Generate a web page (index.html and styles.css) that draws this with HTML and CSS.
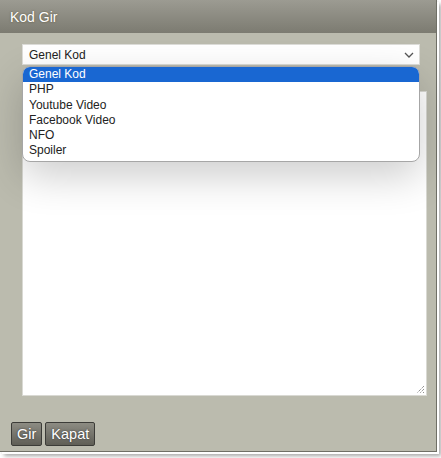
FILE: index.html
```html
<!DOCTYPE html>
<html lang="tr">
<head>
<meta charset="UTF-8">
<title>Kod Gir</title>
<link rel="stylesheet" href="styles.css">
</head>
<body>
<div class="window">
  <div class="titlebar">Kod Gir</div>

  <div class="content">
    <div class="select-wrap">
      <div class="select">
        <span>Genel Kod</span>
        <svg class="chevron" width="10" height="6" viewBox="0 0 10 6"><path d="M1 1 L5 5 L9 1" fill="none" stroke="#555" stroke-width="1.3"/></svg>
      </div>
      <!-- acik liste -->
      <ul class="options">
        <li class="sel">Genel Kod</li>
        <li>PHP</li>
        <li>Youtube Video</li>
        <li>Facebook Video</li>
        <li>NFO</li>
        <li>Spoiler</li>
      </ul>
    </div>

    <div class="code-box">
      <svg class="grip" width="9" height="9" viewBox="0 0 9 9"><path d="M8 1 L1 8 M8 4 L4 8 M8 7 L7 8" stroke="#666" stroke-width="1" stroke-dasharray="1 1"/></svg>
    </div>

    <div class="buttons">
      <button class="btn">Gir</button>
      <button class="btn">Kapat</button>
    </div>
  </div>
</div>
</body>
</html>
```

FILE: styles.css
```css
html,body{margin:0;padding:0;background:#fff;}
body{font-family:"Liberation Sans",Arial,sans-serif;width:441px;height:458px;overflow:hidden;}

.window{
  width:436px;height:451px;background:#bbbbae;
  border-right:1px solid #6f6f66;border-bottom:1px solid #6f6f66;
  box-shadow:2px 2px 0 #fff,4px 4px 4px rgba(0,0,0,.35);
}
.titlebar{
  height:33px;line-height:35px;padding-left:10px;
  color:#fff;font-size:14px;
  background:linear-gradient(#9c9b92,#7c7b71);
  text-shadow:0 0 2px #5a5030;
}
.content{padding:11px 9px 0 22px;}

.select-wrap{position:relative;width:398px;}
.select{
  height:21px;background:#fff;border:1px solid #dcdcd8;box-sizing:border-box;
  display:flex;align-items:center;justify-content:space-between;
  padding:0 5px 0 6px;font-size:12px;color:#222;
}
.chevron{margin-top:1px;}

.options{
  position:absolute;left:0;top:22px;width:398px;box-sizing:border-box;
  margin:0;padding:0 0 2px;list-style:none;background:#fff;
  border:1px solid #a6a6a6;border-radius:8px;overflow:hidden;
  box-shadow:0 14px 40px rgba(0,0,0,.2);
  font-size:12px;color:#222;z-index:2;
}
.options li{height:15.3px;line-height:15px;padding-left:6px;}
.options li.sel{background:#1967d2;color:#fff;}

.code-box{
  position:relative;margin-top:26px;width:405px;height:305px;
  background:#fff;border:1px solid #d9d9d3;box-sizing:border-box;
}
.grip{position:absolute;right:1px;bottom:1px;}

.buttons{display:flex;gap:3px;margin:26px 0 0 -11px;}
.btn{
  height:24px;padding:0 5px;font-family:"Liberation Sans",Arial,sans-serif;
  font-size:14.5px;color:#fff;text-shadow:0 0 2px #333;
  background:linear-gradient(#8d8c83,#5f5e56);
  border:1px solid #3c3c38;border-radius:2px;
}
```
